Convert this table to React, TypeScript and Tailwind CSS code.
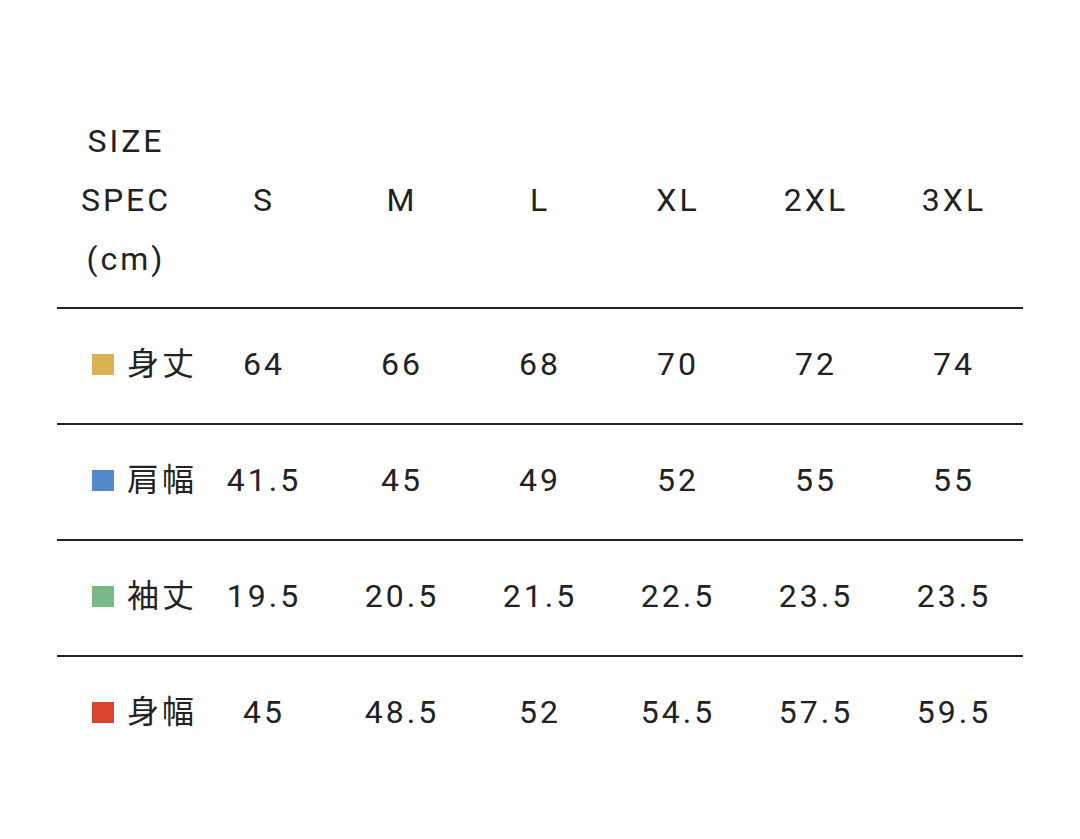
import React from 'react';

const SIZES = ['S', 'M', 'L', 'XL', '2XL', '3XL'];

const ROWS: { label: string; color: string; values: string[] }[] = [
    { label: '身丈', color: 'bg-[#dcb054]', values: ['64', '66', '68', '70', '72', '74'] },
    { label: '肩幅', color: 'bg-[#5389cb]', values: ['41.5', '45', '49', '52', '55', '55'] },
    { label: '袖丈', color: 'bg-[#77ba86]', values: ['19.5', '20.5', '21.5', '22.5', '23.5', '23.5'] },
    { label: '身幅', color: 'bg-[#d8442f]', values: ['45', '48.5', '52', '54.5', '57.5', '59.5'] },
];

const App: React.FC = () => {
    return (
        <div
            className="w-[1080px] h-[839px] bg-white text-[#222] pl-[57px] pt-[112px]"
            style={{ fontFamily: 'Roboto, "Noto Sans CJK JP", sans-serif' }}
        >
            <div className="w-[966px] text-[32px] tracking-[3px]">
                {/* header */}
                <div className="grid grid-cols-7 items-center pb-[18px]">
                    <div className="flex flex-col items-center leading-[59px]">
                        <span>SIZE</span>
                        <span>SPEC</span>
                        <span>(cm)</span>
                    </div>
                    {SIZES.map(s => (
                        <div key={s} className="text-center leading-[59px]">{s}</div>
                    ))}
                </div>

                {ROWS.map(row => (
                    <div key={row.label} className="grid grid-cols-7 items-center h-[116px] border-t-2 border-[#222] pb-[4px]">
                        <div className="flex items-center pl-[35px] whitespace-nowrap">
                            <span className={`w-[22px] h-[21px] mr-[13px] shrink-0 ${row.color}`} />
                            <span>{row.label}</span>
                        </div>
                        {row.values.map((v, i) => (
                            <div key={i} className="text-center">{v}</div>
                        ))}
                    </div>
                ))}
            </div>
        </div>
    );
};

export default App;
